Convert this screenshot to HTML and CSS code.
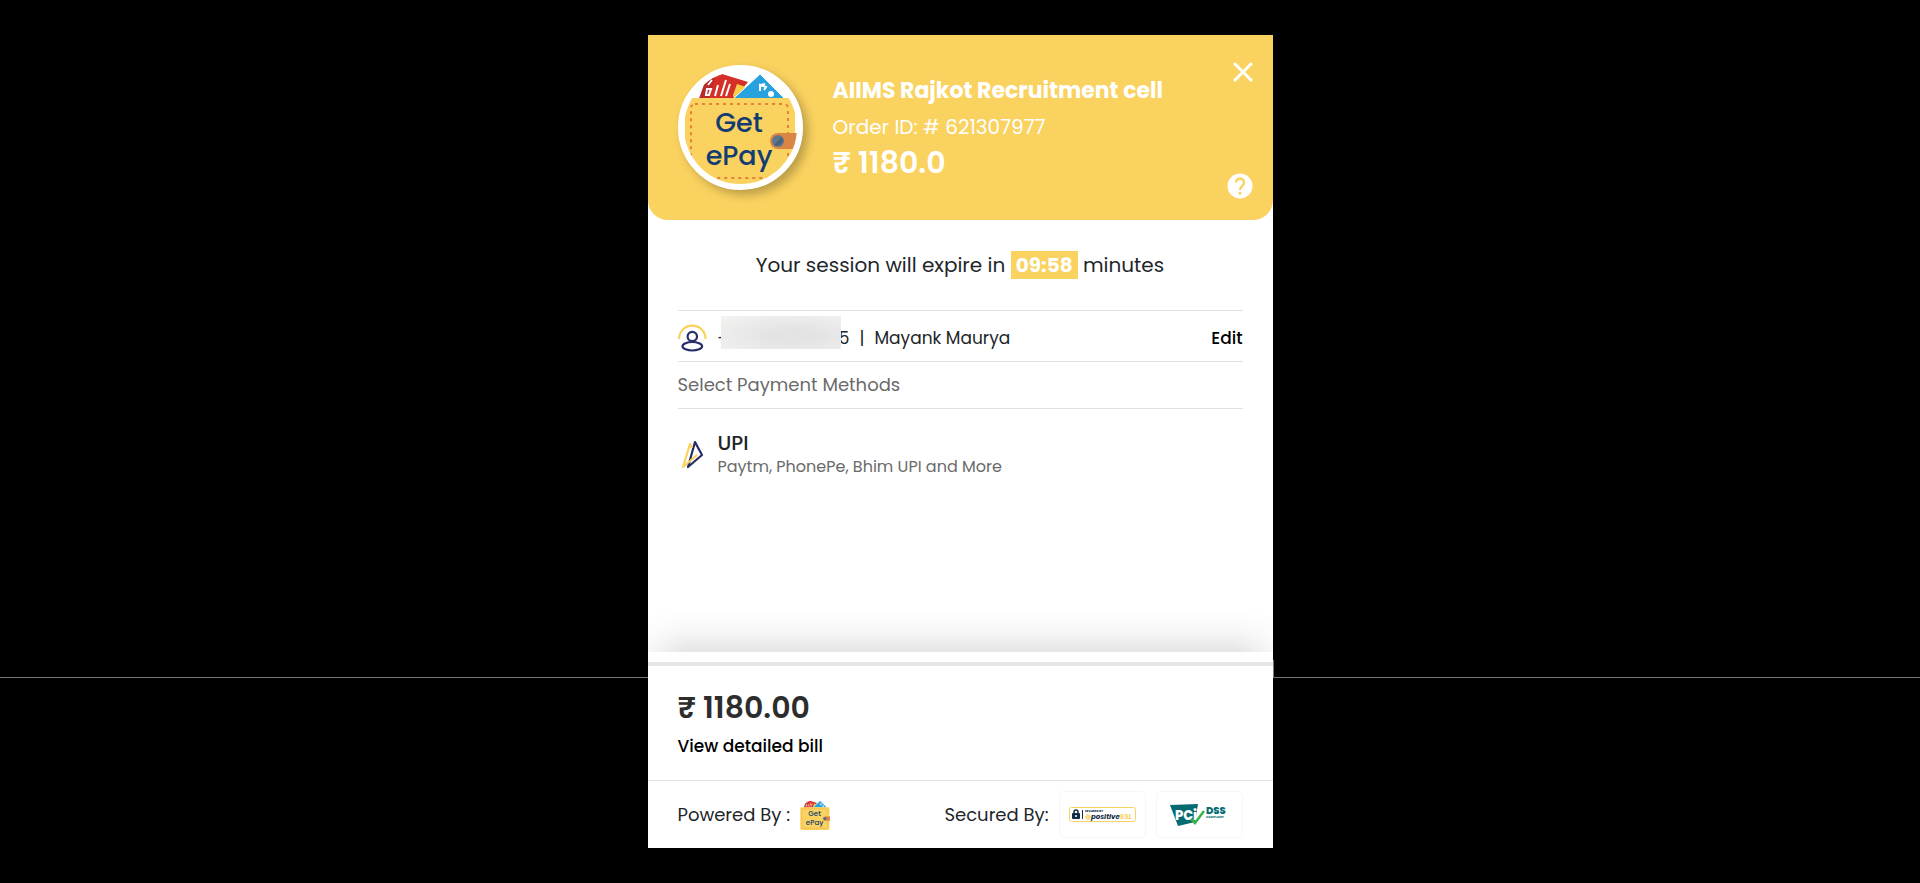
FILE: index.html
```html
<!DOCTYPE html>
<html lang="en">
<head>
    <meta charset="UTF-8">
    <meta name="viewport" content="width=device-width, initial-scale=1.0">
    <title>GetePay Checkout</title>
    <link rel="stylesheet" href="styles.css">
</head>
<body>
    <!-- Wallet logo, used in the header and the footer -->
    <svg class="sprite" aria-hidden="true">
        <symbol id="wallet" viewBox="0 0 113 113">
            <path d="M15 28 20 14Q28 6 38 3L64 11 50 28Z" fill="#d62f27"/>
            <path d="M15 28 20 14Q25 8 31 6L25 28Z" fill="#b92a2a"/>
            <path d="M22 24 23 18H27L25 24ZM24 14 28 9M31 25 34 14M37 25 42 9M42 25 46 13" stroke="#fff" stroke-width="2" fill="none"/>
            <path d="M53 13 62 16 50 28 49 24Z" fill="#fbcb4b"/>
            <path d="M49 28 76 3 101 28Z" fill="#27a2de" stroke="#fff" stroke-width="1"/>
            <path d="M76 20V14L82 16 80 19M76 14 81 13" stroke="#fff" stroke-width="2" fill="none"/>
            <circle cx="87" cy="23" r="3" fill="#fff"/>
            <rect x="1" y="27" width="110" height="86" rx="4" fill="#fad25f"/>
            <rect x="7" y="33" width="97" height="74" rx="4" fill="none" stroke="#ec7f36" stroke-width="2" stroke-dasharray="3 4"/>
            <path d="M113 62H94a8 8 0 0 0 0 16h19z" fill="#d98644"/>
            <circle cx="94" cy="70" r="6" fill="#5f7688"/>
            <path d="M98 66a6 6 0 0 1-8 8z" fill="#47617a"/>
            <text x="55" y="61" class="wallet-text">Get</text>
            <text x="55" y="94" class="wallet-text">ePay</text>
        </symbol>
    </svg>

    <main class="checkout">
        <header class="header">
            <div class="logo">
                <svg role="img" aria-label="GetePay"><use href="#wallet"/></svg>
            </div>
            <div class="merchant">
                <h1>AIIMS Rajkot Recruitment cell</h1>
                <p class="order">Order ID: # 621307977</p>
                <p class="price">₹ 1180.0</p>
            </div>
            <div class="header-actions">
                <button type="button" class="icon-btn" aria-label="Close">
                    <svg width="20" height="20" viewBox="0 0 20 20"><path d="M2 2 18 18M18 2 2 18" stroke="#fff" stroke-width="3" stroke-linecap="round"/></svg>
                </button>
                <button type="button" class="icon-btn" aria-label="Help">
                    <svg width="26" height="26" viewBox="0 0 26 26">
                        <circle cx="13" cy="13" r="12.5" fill="#fff"/>
                        <path d="M9 9.5a4 4 0 1 1 6.6 3.1C14 14 13 14.7 13 17" fill="none" stroke="#fad25f" stroke-width="2.5"/>
                        <rect x="11.7" y="19" width="2.6" height="2.6" fill="#fad25f"/>
                    </svg>
                </button>
            </div>
        </header>

        <section class="content">
            <p class="session">Your session will expire in <strong class="timer">09:58</strong> minutes</p>

            <div class="contact">
                <svg class="row-icon" viewBox="0 0 30 30" fill="none" stroke-width="2.2">
                    <path d="M1 16a13.300 13.300 0 0 1 26.600 0" stroke="#fad25f"/>
                    <circle cx="14.300" cy="13.500" r="4.700" stroke="#272d68"/>
                    <path d="M14.300 19c-5 0-9.800 2-9.800 4.300s4.800 4.200 9.800 4.200 9.800-1.900 9.800-4.200-4.800-4.300-9.800-4.300z" stroke="#272d68"/>
                </svg>
                <span class="phone"><span>-</span><span>5</span></span>
                <span class="divider">|</span>
                <span>Mayank Maurya</span>
                <button type="button" class="link-btn edit">Edit</button>
            </div>

            <h2 class="methods-title">Select Payment Methods</h2>

            <a href="#" class="method">
                <svg class="row-icon" viewBox="0 0 30 30" fill="none" stroke-width="2.2" stroke-linejoin="round">
                    <path d="M17 2 24 15 10 27Z" stroke="#272d68"/>
                    <path d="M14 8 12 4 5 27 19 15" stroke="#fad25f"/>
                </svg>
                <span class="method-text">
                    <span class="method-name">UPI</span>
                    <span class="method-info">Paytm, PhonePe, Bhim UPI and More</span>
                </span>
            </a>
        </section>

        <div class="shade"></div>

        <section class="bill">
            <p class="total">₹ 1180.00</p>
            <button type="button" class="link-btn">View detailed bill</button>
        </section>

        <footer class="footer">
            <span>Powered By :</span>
            <svg class="footer-logo" role="img" aria-label="GetePay"><use href="#wallet"/></svg>
            <span class="secured">Secured By:</span>
            <div class="badge">
                <svg width="67" height="15" viewBox="0 0 67 15" role="img" aria-label="Secured by Positive SSL">
                    <rect x="0.5" y="0.5" width="66" height="14" rx="2" fill="#fff" stroke="#fad25f"/>
                    <rect x="3" y="6" width="8" height="6" rx="1" fill="#142c44"/>
                    <path d="M5 7V5a2 2 0 0 1 4 0v2" fill="none" stroke="#142c44" stroke-width="1.5"/>
                    <circle cx="7" cy="9" r="1" fill="#fff"/>
                    <path d="M13.5 3v9" stroke="#142c44"/>
                    <text x="16" y="5" class="ssl-small">SECURED BY</text>
                    <circle cx="19" cy="10" r="2.3" fill="none" stroke="#fad25f"/>
                    <path d="M19 7v6M16 10h6" stroke="#fad25f"/>
                    <text x="22" y="12" class="ssl-name">positive<tspan class="ssl-mark">SSL</tspan></text>
                </svg>
            </div>
            <div class="badge">
                <svg width="58" height="24" viewBox="0 0 58 24" role="img" aria-label="PCI DSS Compliant">
                    <path d="M0 2 28 1 25 19 8 23Z" fill="#046b70"/>
                    <text x="5" y="17" class="pci-name">PCi</text>
                    <path d="M21 16 25 20 34 8" fill="none" stroke="#36b54a" stroke-width="2.5"/>
                    <text x="36" y="11" class="dss-name">DSS</text>
                    <text x="36" y="15" class="dss-small">COMPLIANT</text>
                </svg>
            </div>
        </footer>
    </main>
</body>
</html>
```
FILE: styles.css
```css
* {
    box-sizing: border-box;
}

body {
    margin: 0;
    background: #000;
    color: #212529;
    font-family: Poppins, Inter, sans-serif;
    font-size: 17px;
    line-height: 24px;
}

h1, h2, p {
    margin: 0;
}

svg {
    display: block;
    flex-shrink: 0;
}

button {
    padding: 0;
    border: none;
    background: none;
    font: inherit;
    cursor: pointer;
}

.sprite {
    display: none;
}

.checkout {
    display: flex;
    flex-direction: column;
    width: 100%;
    max-width: 625px;
    min-height: calc(100vh - 70px);
    margin: 35px auto;
    background: #fff;
}

/* Header */
.header {
    display: flex;
    align-items: center;
    gap: 30px;
    padding: 30px;
    padding-right: 20px;
    background: #fad25f;
    border-radius: 0 0 20px 20px;
    color: #fff;
}

.logo {
    flex-shrink: 0;
    width: 125px;
    height: 125px;
    border: 6px solid #fff;
    border-radius: 50%;
    background: #fff;
    box-shadow: 5px 5px 10px rgba(0, 0, 0, 0.25);
    overflow: hidden;
}

.logo svg {
    width: 113px;
    height: 113px;
}

.wallet-text {
    fill: #123c72;
    font-size: 27px;
    font-weight: 500;
    text-anchor: middle;
}

.merchant {
    flex: 1;
    padding-bottom: 2px;
}

.merchant h1 {
    font-size: 22px;
    font-weight: 700;
    line-height: 36px;
}

.order {
    font-size: 20px;
    line-height: 36px;
}

.price {
    font-size: 30px;
    font-weight: 600;
    line-height: 36px;
}

.header-actions {
    display: flex;
    flex-direction: column;
    align-items: flex-end;
    justify-content: space-between;
    align-self: stretch;
    margin: -3px 0 -9px;
}

.icon-btn {
    display: block;
}

/* Content */
.content {
    flex: 1;
    padding: 30px 30px 0;
}

.session {
    margin-bottom: 30px;
    font-size: 20px;
    line-height: 30px;
    text-align: center;
}

.timer {
    padding: 0 5px;
    background: #fad25f;
    color: #fff;
}

.contact {
    display: flex;
    align-items: center;
    height: 52px;
    padding-top: 4px;
    border-top: 1px solid #dee2e6;
    border-bottom: 1px solid #dee2e6;
}

.row-icon {
    width: 30px;
    height: 30px;
    margin-right: 10px;
}

.phone {
    position: relative;
    display: flex;
    justify-content: space-between;
    width: 132px;
}

/* Blurred mask over the number */
.phone::after {
    content: "";
    position: absolute;
    top: -10px;
    left: 3px;
    width: 120px;
    height: 33px;
    background: radial-gradient(ellipse at 60% 60%, #e3e3e3 20%, #f4f3f2 100%);
}

.divider {
    margin: 0 10px;
}

.link-btn {
    color: #000;
    font-weight: 500;
}

.edit {
    margin-left: auto;
}

.methods-title {
    padding: 11px 0;
    border-bottom: 1px solid #dee2e6;
    color: #6a6a6a;
    font-size: 18px;
    font-weight: 400;
}

.method {
    display: flex;
    align-items: center;
    padding: 22px 0;
    text-decoration: none;
}

.method-text {
    display: flex;
    flex-direction: column;
}

.method-name {
    color: #212529;
    font-size: 20px;
    font-weight: 500;
}

.method-info {
    color: #6a6a6a;
    font-size: 16px;
}

.shade {
    height: 40px;
    margin-bottom: 10px;
    background: linear-gradient(to right, rgba(255, 255, 255, 0.7), rgba(255, 255, 255, 0) 6%, rgba(255, 255, 255, 0) 94%, rgba(255, 255, 255, 0.7)), linear-gradient(#fff, #f6f6f6 50%, #e5e5e5);
}

/* Bill */
.bill {
    position: relative;
    padding: 24px 30px 22px;
    border-top: 4px solid #e6e6e6;
    border-bottom: 1px solid #dee2e6;
}

/* Rule that runs from the card to both window edges */
.bill::before,
.bill::after {
    content: "";
    position: absolute;
    top: -6px;
    width: calc(50vw - 50%);
    height: 17px;
    border-bottom: 1px solid #777;
}

.bill::before {
    right: 100%;
}

.bill::after {
    left: 100%;
    border-left: 1px solid #777;
}

.total {
    margin-bottom: 8px;
    color: #2d2d2d;
    font-size: 30px;
    font-weight: 600;
    line-height: 36px;
}

/* Footer */
.footer {
    display: flex;
    align-items: center;
    gap: 10px;
    padding: 10px 30px;
    font-size: 18px;
}

.footer-logo {
    width: 30px;
    height: 30px;
}

.secured {
    margin-left: auto;
}

.badge {
    display: flex;
    align-items: center;
    justify-content: center;
    width: 87px;
    height: 47px;
    border: 1px solid #f6f6f6;
    border-radius: 5px;
}

.ssl-small {
    fill: #142c44;
    font-size: 3px;
    font-weight: 700;
}

.ssl-name {
    fill: #142c44;
    font-size: 7px;
    font-style: italic;
    font-weight: 700;
}

.ssl-mark {
    fill: #fad25f;
}

.pci-name {
    fill: #fff;
    font-size: 13px;
    font-weight: 800;
}

.dss-name {
    fill: #046b70;
    font-size: 10px;
    font-weight: 800;
}

.dss-small {
    fill: #046b70;
    font-size: 3px;
    font-weight: 700;
}
```
